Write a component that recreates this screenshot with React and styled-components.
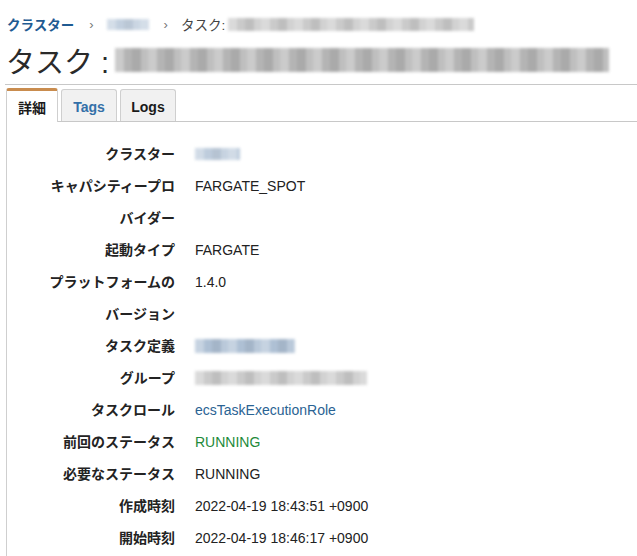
import React from "react";
import styled, { createGlobalStyle } from "styled-components";

const GlobalStyle = createGlobalStyle`
  body {
    margin: 0;
    background: #fff;
    font-family: "Liberation Sans", "Noto Sans CJK JP", sans-serif;
    color: #16191f;
  }
`;

const Page = styled.div`
  padding: 12px 0 0 6px;
  overflow: hidden;
`;

const Crumbs = styled.div`
  display: flex;
  align-items: center;
  height: 24px;
  padding-left: 1px;
  font-size: 13.5px;
`;

const CrumbLink = styled.a`
  color: #1f5b92;
  font-weight: 700;
  text-decoration: none;
`;

const Sep = styled.span`
  color: #777;
  font-size: 13px;
  margin: 0 13px 0 15px;
`;

const CrumbText = styled.span`
  color: #444;
  margin-right: 3px;
`;

const Blur = styled.span`
  display: inline-block;
  flex: none;
  width: ${(p) => p.$w}px;
  height: ${(p) => p.$h}px;
  margin-left: ${(p) => p.$ml || 0}px;
  background:
    repeating-linear-gradient(
      90deg,
      rgba(255, 255, 255, 0.3) 0 9px,
      transparent 9px 17px,
      rgba(0, 0, 0, 0.06) 17px 26px,
      rgba(255, 255, 255, 0.15) 26px 33px
    ),
    ${(p) => (p.$tone === "blue" ? "#aec0d4" : p.$tone === "dark" ? "#b4b4b4" : "#cacaca")};
  filter: blur(1.5px);
  opacity: ${(p) => p.$o || 1};
`;

const Title = styled.h1`
  display: flex;
  align-items: center;
  margin: 0;
  height: 48px;
  font-size: 29px;
  font-weight: 400;
  color: #2a2a2a;
`;

const Rule = styled.hr`
  border: 0;
  border-top: 1px solid #c8c8c8;
  margin: 0 0 4px -1px;
`;

const TabBar = styled.div`
  display: flex;
  gap: 3px;
  border-bottom: 1px solid #c8c8c8;
`;

const Tab = styled.div`
  display: flex;
  align-items: center;
  justify-content: center;
  width: ${(p) => p.$w}px;
  height: 32px;
  box-sizing: border-box;
  font-size: 14px;
  font-weight: 700;
  color: ${(p) => (p.$blue ? "#3470a8" : "#1a1a1a")};
  background: ${(p) => (p.$active ? "#fff" : "#f1f1f1")};
  border: 1px solid #cfcfcf;
  border-bottom: 0;
  border-top: ${(p) => (p.$active ? "3px solid #c98c4e" : "1px solid #cfcfcf")};
  border-radius: 3px 3px 0 0;
  margin-bottom: -1px;
  padding-top: ${(p) => (p.$active ? "0" : "2px")};
  ${(p) => p.$active && "height: 34px; margin-top: -1px;"}
`;

const Panel = styled.div`
  border-left: 1px solid #cfcfcf;
  padding: 16px 0 20px;
`;

const Grid = styled.dl`
  display: grid;
  grid-template-columns: 130px 1fr;
  column-gap: 20px;
  margin: 0 0 0 38px;
  font-size: 14px;
  line-height: 32px;
`;

const Label = styled.dt`
  text-align: right;
  font-weight: 700;
  color: #232323;
`;

const Value = styled.dd`
  margin: 0;
  display: flex;
  align-items: center;
  height: 32px;
  color: ${(p) => (p.$kind === "link" ? "#2a6393" : p.$kind === "ok" ? "#1e8a3a" : "#222")};
`;

const rows = [
  ["クラスター", <Blur $w={45} $h={12} $tone="blue" $o={0.8} />],
  ["キャパシティープロバイダー", "FARGATE_SPOT"],
  ["起動タイプ", "FARGATE"],
  ["プラットフォームのバージョン", "1.4.0"],
  ["タスク定義", <Blur $w={100} $h={14} $tone="blue" />],
  ["グループ", <Blur $w={172} $h={14} $tone="grey" />],
  ["タスクロール", "ecsTaskExecutionRole", "link"],
  ["前回のステータス", "RUNNING", "ok"],
  ["必要なステータス", "RUNNING"],
  ["作成時刻", "2022-04-19 18:43:51 +0900"],
  ["開始時刻", "2022-04-19 18:46:17 +0900"],
];

export default function App() {
  return (
    <Page>
      <GlobalStyle />
      <Crumbs>
        <CrumbLink href="#">クラスター</CrumbLink>
        <Sep>›</Sep>
        <Blur $w={42} $h={11} $tone="blue" $o={0.75} />
        <Sep>›</Sep>
        <CrumbText>タスク:</CrumbText>
        <Blur $w={246} $h={13} $tone="grey" />
      </Crumbs>
      <Title>
        タスク :
        <Blur $w={494} $h={24} $tone="dark" $ml={6} />
      </Title>
      <Rule />
      <TabBar>
        <Tab $active $w={52}>詳細</Tab>
        <Tab $w={56} $blue>Tags</Tab>
        <Tab $w={56}>Logs</Tab>
      </TabBar>
      <Panel>
        <Grid>
          {rows.map(([label, value, kind]) => (
            <React.Fragment key={label}>
              <Label>{label}</Label>
              <Value $kind={kind}>{value}</Value>
            </React.Fragment>
          ))}
        </Grid>
      </Panel>
    </Page>
  );
}
